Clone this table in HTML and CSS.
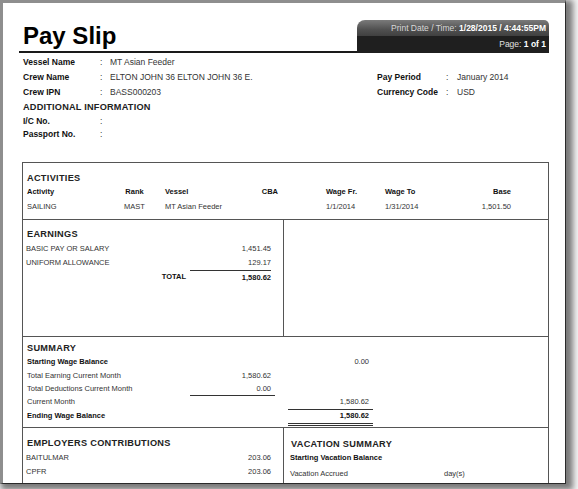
FILE: index.html
```html
<!DOCTYPE html>
<html>
<head>
<meta charset="utf-8">
<link rel="stylesheet" href="styles.css">
</head>
<body>
<div class="page">
  <div class="header">
    <div class="title">Pay Slip</div>
    <div class="tab">
      <div class="tab-top">Print Date / Time: <b>1/28/2015 / 4:44:55PM</b></div>
      <div class="tab-bottom">Page: <b>1 of 1</b></div>
    </div>
  </div>

  <div class="info">
    <div class="info-left">
      <div class="kv"><span class="k">Vessel Name</span><span class="c">:</span><span class="v">MT Asian Feeder</span></div>
      <div class="kv"><span class="k">Crew Name</span><span class="c">:</span><span class="v">ELTON JOHN 36 ELTON JOHN 36 E.</span></div>
      <div class="kv"><span class="k">Crew IPN</span><span class="c">:</span><span class="v">BASS000203</span></div>
      <div class="info-heading">ADDITIONAL INFORMATION</div>
      <div class="kv kv14"><span class="k">I/C No.</span><span class="c">:</span><span class="v"></span></div>
      <div class="kv kv13"><span class="k">Passport No.</span><span class="c">:</span><span class="v"></span></div>
    </div>
    <div class="info-right">
      <div class="kv"><span class="k">Pay Period</span><span class="c">:</span><span class="v">January 2014</span></div>
      <div class="kv"><span class="k">Currency Code</span><span class="c">:</span><span class="v">USD</span></div>
    </div>
  </div>

  <div class="box">
    <div class="section activities">
      <div class="heading">ACTIVITIES</div>
      <div class="act-row act-head">
        <span>Activity</span><span class="center">Rank</span><span class="pl">Vessel</span><span class="right">CBA</span><span class="pl48">Wage Fr.</span><span>Wage To</span><span class="right">Base</span>
      </div>
      <div class="act-row act-data">
        <span>SAILING</span><span class="center">MAST</span><span class="pl">MT Asian Feeder</span><span class="right"></span><span class="pl48">1/1/2014</span><span>1/31/2014</span><span class="right">1,501.50</span>
      </div>
    </div>

    <div class="section split earnings">
      <div class="col-left">
        <div class="heading">EARNINGS</div>
        <div class="line-row"><span class="lbl">BASIC PAY OR SALARY</span><span class="val">1,451.45</span></div>
        <div class="line-row"><span class="lbl">UNIFORM ALLOWANCE</span><span class="val">129.17</span></div>
        <div class="line-row total"><span class="lbl">TOTAL</span><span class="val topline">1,580.62</span></div>
      </div>
      <div class="col-right"></div>
    </div>

    <div class="section summary">
      <div class="heading">SUMMARY</div>
      <div class="sum-row h14"><span class="bold">Starting Wage Balance</span><span></span><span></span><span class="num">0.00</span></div>
      <div class="sum-row h13"><span>Total Earning Current Month</span><span class="num">1,580.62</span><span></span><span></span></div>
      <div class="sum-row h13"><span>Total Deductions Current Month</span><span class="num under">0.00</span><span></span><span></span></div>
      <div class="sum-row h14"><span>Current Month</span><span></span><span></span><span class="num under">1,580.62</span></div>
      <div class="sum-row h14 bold"><span>Ending Wage Balance</span><span></span><span></span><span class="num dbl">1,580.62</span></div>
    </div>

    <div class="section split employers">
      <div class="col-left">
        <div class="heading">EMPLOYERS CONTRIBUTIONS</div>
        <div class="line-row"><span class="lbl">BAITULMAR</span><span class="val">203.06</span></div>
        <div class="line-row"><span class="lbl">CPFR</span><span class="val">203.06</span></div>
      </div>
      <div class="col-right vac">
        <div class="heading vac-heading">VACATION SUMMARY</div>
        <div class="vac-row bold">Starting Vacation Balance</div>
        <div class="vac-row accrued"><span class="vac-lbl">Vacation Accrued</span><span>day(s)</span></div>
      </div>
    </div>
  </div>
</div>
</body>
</html>
```

FILE: styles.css
```css
* { box-sizing: border-box; }
html, body { margin: 0; padding: 0; }
body {
  background: #f4f4f4;
  font-family: "Liberation Sans", Arial, sans-serif;
  color: #222;
  width: 578px;
  height: 489px;
  overflow: hidden;
}
.page {
  width: 566px;
  height: 484px;
  background: #fff;
  border-top: 3px solid #8e8e8e;
  border-left: 3px solid #8e8e8e;
  border-right: 1px solid #2a2a2a;
  border-bottom: 1px solid #2a2a2a;
  box-shadow: 4px 3px 6px 3px rgba(0,0,0,0.5);
  padding: 0 16px;
  overflow: hidden;
}
.header {
  display: flex;
  height: 50px;
}
.title {
  flex: 1;
  height: 50px;
  border-bottom: 2px solid #1a1a1a;
  font-size: 24px;
  font-weight: bold;
  line-height: 24px;
  padding: 21px 0 0 4px;
  color: #000;
}
.tab {
  width: 192px;
  margin-top: 17px;
  height: 33px;
  border-radius: 8px 5px 0 0;
  overflow: hidden;
  text-align: right;
  font-size: 8.5px;
}
.tab-top {
  height: 16px;
  line-height: 16px;
  padding-right: 3px;
  background: linear-gradient(#7a7a7a, #505050 60%, #404040);
  color: #d8d8d8;
}
.tab-top b, .tab-bottom b { color: #fff; }
.tab-bottom {
  height: 17px;
  line-height: 16px;
  padding-right: 3px;
  background: #1f1f1f;
  color: #e0e0e0;
}

.info {
  display: flex;
  margin-top: 2px;
  padding-left: 4px;
}
.info-left { width: 354px; }
.info-right { padding-top: 15px; }
.kv {
  display: flex;
  height: 15px;
  line-height: 15px;
  font-size: 8.5px;
}
.kv14 { height: 14px; line-height: 14px; }
.kv13 { height: 13px; line-height: 13px; }
.k { width: 77px; font-weight: bold; color: #111; }
.c { width: 10px; color: #333; }
.v { color: #333; }
.info-right .k { width: 69px; }
.info-right .c { width: 11px; }
.info-heading {
  height: 14px;
  line-height: 14px;
  font-size: 9.2px;
  font-weight: bold;
  letter-spacing: 0.2px;
  color: #222;
}

.box {
  margin: 21px 0 0 3px;
  border: 1px solid #555;
  height: 340px;
  font-size: 7.5px;
  color: #333;
}
.section { border-bottom: 1px solid #555; }
.heading {
  font-size: 9.2px;
  font-weight: bold;
  letter-spacing: 0.3px;
  color: #222;
}
.activities {
  height: 57px;
  padding: 8px 0 0 4px;
}
.activities .heading { line-height: 14px; height: 14px; }
.act-row {
  display: grid;
  grid-template-columns: 90px 35px 93px 33px 107px 60px 66px;
}
.act-head { height: 14px; line-height: 14px; font-weight: bold; color: #111; }
.act-data { height: 15px; line-height: 15px; }
.center { text-align: center; }
.right { text-align: right; }
.pl { padding-left: 13px; }
.pl48 { padding-left: 48px; }

.split { display: flex; }
.col-left {
  width: 261px;
  border-right: 1px solid #555;
  padding: 0 12px 0 3px;
}
.col-right { flex: 1; }
.earnings { height: 117px; }
.earnings .col-left { padding-top: 6px; }
.earnings .heading { line-height: 16px; height: 16px; padding-left: 1px; }
.line-row {
  display: flex;
  height: 14px;
  line-height: 14px;
}
.lbl { flex: 1; }
.val { width: 81px; text-align: right; }
.total { font-weight: bold; color: #111; }
.total .lbl { text-align: right; padding-right: 4px; }
.topline { border-top: 1px solid #333; line-height: 13px; }

.summary {
  height: 91px;
  padding: 4px 0 0 4px;
}
.summary .heading { line-height: 14px; height: 14px; }
.sum-row {
  display: grid;
  grid-template-columns: 163px 85px 13px 85px;
}
.sum-row > span { height: 100%; }
.h14 { height: 14px; line-height: 14px; }
.h13 { height: 13px; line-height: 13px; }
.bold { font-weight: bold; color: #111; }
.num { text-align: right; padding-right: 4px; }
.under { border-bottom: 1px solid #333; }
.dbl { border-bottom: 3px double #333; line-height: 13px; height: 17px !important; }

.employers { border-bottom: none; height: 120px; }
.employers .col-left { padding-top: 8px; }
.employers .heading { line-height: 14px; height: 15px; padding-left: 1px; }
.vac { padding: 9px 0 0 6px; }
.vac-heading { line-height: 12px; height: 12px; }
.vac-row { height: 12px; line-height: 12px; }
.accrued { display: flex; margin-top: 2px; height: 15px; line-height: 15px; }
.vac-lbl { width: 154px; }
```
